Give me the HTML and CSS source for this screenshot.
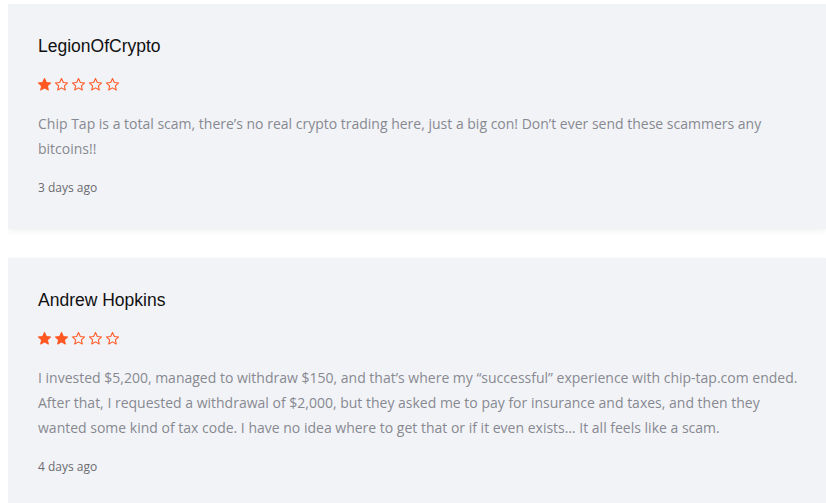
FILE: index.html
```html
<!DOCTYPE html>
<html lang="en">
<head>
    <meta charset="UTF-8">
    <meta name="viewport" content="width=device-width, initial-scale=1.0">
    <title>Reviews</title>
    <link rel="stylesheet" href="styles.css">
</head>
<body>
    <div class="review">
        <h3 class="review-name">LegionOfCrypto</h3>
        <div class="stars">
            <svg class="star full" viewBox="0 0 24 24"><path d="M12 2.5l2.9 6.3 6.9.7-5.2 4.6 1.5 6.8L12 17.4l-6.1 3.5 1.5-6.8-5.2-4.6 6.9-.7z"/></svg>
            <svg class="star" viewBox="0 0 24 24"><path d="M12 2.5l2.9 6.3 6.9.7-5.2 4.6 1.5 6.8L12 17.4l-6.1 3.5 1.5-6.8-5.2-4.6 6.9-.7z"/></svg>
            <svg class="star" viewBox="0 0 24 24"><path d="M12 2.5l2.9 6.3 6.9.7-5.2 4.6 1.5 6.8L12 17.4l-6.1 3.5 1.5-6.8-5.2-4.6 6.9-.7z"/></svg>
            <svg class="star" viewBox="0 0 24 24"><path d="M12 2.5l2.9 6.3 6.9.7-5.2 4.6 1.5 6.8L12 17.4l-6.1 3.5 1.5-6.8-5.2-4.6 6.9-.7z"/></svg>
            <svg class="star" viewBox="0 0 24 24"><path d="M12 2.5l2.9 6.3 6.9.7-5.2 4.6 1.5 6.8L12 17.4l-6.1 3.5 1.5-6.8-5.2-4.6 6.9-.7z"/></svg>
        </div>
        <p class="review-text">Chip Tap is a total scam, there’s no real crypto trading here, just a big con! Don’t ever send these scammers any bitcoins!!</p>
        <span class="review-date">3 days ago</span>
    </div>
    <div class="review">
        <h3 class="review-name">Andrew Hopkins</h3>
        <div class="stars">
            <svg class="star full" viewBox="0 0 24 24"><path d="M12 2.5l2.9 6.3 6.9.7-5.2 4.6 1.5 6.8L12 17.4l-6.1 3.5 1.5-6.8-5.2-4.6 6.9-.7z"/></svg>
            <svg class="star full" viewBox="0 0 24 24"><path d="M12 2.5l2.9 6.3 6.9.7-5.2 4.6 1.5 6.8L12 17.4l-6.1 3.5 1.5-6.8-5.2-4.6 6.9-.7z"/></svg>
            <svg class="star" viewBox="0 0 24 24"><path d="M12 2.5l2.9 6.3 6.9.7-5.2 4.6 1.5 6.8L12 17.4l-6.1 3.5 1.5-6.8-5.2-4.6 6.9-.7z"/></svg>
            <svg class="star" viewBox="0 0 24 24"><path d="M12 2.5l2.9 6.3 6.9.7-5.2 4.6 1.5 6.8L12 17.4l-6.1 3.5 1.5-6.8-5.2-4.6 6.9-.7z"/></svg>
            <svg class="star" viewBox="0 0 24 24"><path d="M12 2.5l2.9 6.3 6.9.7-5.2 4.6 1.5 6.8L12 17.4l-6.1 3.5 1.5-6.8-5.2-4.6 6.9-.7z"/></svg>
        </div>
        <p class="review-text">I invested $5,200, managed to withdraw $150, and that’s where my “successful” experience with chip-tap.com ended. After that, I requested a withdrawal of $2,000, but they asked me to pay for insurance and taxes, and then they wanted some kind of tax code. I have no idea where to get that or if it even exists… It all feels like a scam.</p>
        <span class="review-date">4 days ago</span>
    </div>
</body>
</html>
```

FILE: styles.css
```css
body {
    margin: 4px 0 0 8px;
    background: #fff;
    font-family: 'Open Sans', sans-serif;
    overflow: hidden;
}
.review {
    background: #f2f3f7;
    padding: 30px 20px 32px 30px;
    margin-bottom: 29px;
    box-shadow: 0 2px 6px rgba(0,0,0,0.06);
}
.review-name {
    margin: 0;
    font-family: 'Liberation Sans', Arial, sans-serif;
    font-weight: normal;
    font-size: 17.5px;
    line-height: 24px;
    color: #111;
}
.stars {
    display: flex;
    gap: 2px;
    margin: 19px 0 0 -1px;
    height: 15px;
}
.star {
    width: 15px;
    height: 15px;
    fill: none;
    stroke: #ff5722;
    stroke-width: 1.7;
    stroke-linejoin: round;
}
.star.full {
    fill: #ff5722;
}
.review-text {
    margin: 19px 0 0;
    font-size: 14px;
    line-height: 25px;
    color: #878991;
}
.review-date {
    display: block;
    margin-top: 18px;
    font-size: 12px;
    line-height: 18px;
    color: #6b6b70;
}
```
